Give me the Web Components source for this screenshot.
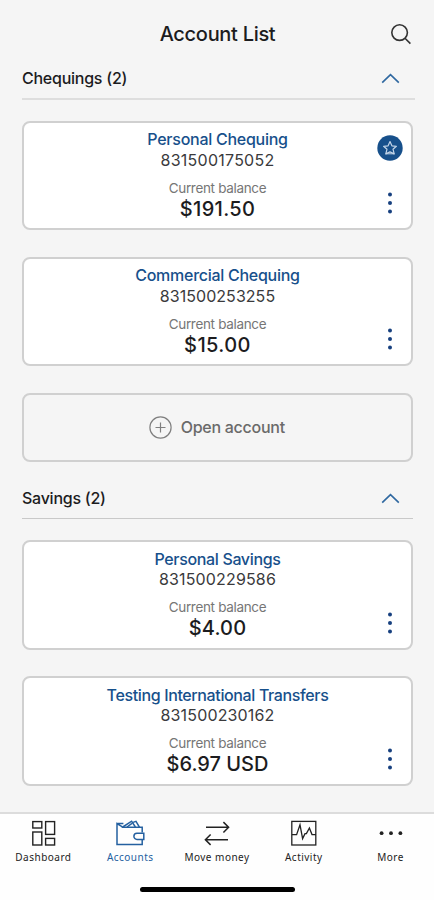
<!DOCTYPE html>
<html lang="en">
<head>
  <meta charset="UTF-8">
  <meta name="viewport" content="width=device-width, initial-scale=1.0">
  <title>Account List</title>
  <style>
    body {
      margin: 0;
      background: #f5f5f5;
      font-family: Inter, "Liberation Sans", sans-serif;
      color: #1c1c1e;
    }
  </style>
</head>
<body>
  <bank-app>
    <app-header slot="header">Account List</app-header>
    <account-section heading="Chequings (2)" class="first">
      <account-card name="Personal Chequing" number="831500175052" balance="$191.50" favourite
        style="--number-spacing: 0.25px; --balance-spacing: 0.3px"></account-card>
      <account-card name="Commercial Chequing" number="831500253255" balance="$15.00"
        style="--balance-spacing: 0.4px"></account-card>
      <open-account>Open account</open-account>
    </account-section>
    <account-section heading="Savings (2)">
      <account-card name="Personal Savings" number="831500229586" balance="$4.00"
        style="--name-spacing: -0.35px; --number-spacing: 0.15px; --balance-spacing: 0.15px"></account-card>
      <account-card name="Testing International Transfers" number="831500230162" balance="$6.97 USD"
        style="--name-spacing: -0.37px; --number-spacing: 0.15px; --balance-spacing: 0"></account-card>
    </account-section>
    <tab-bar slot="footer">
      <tab-item icon="dashboard">Dashboard</tab-item>
      <tab-item icon="accounts" active>Accounts</tab-item>
      <tab-item icon="move">Move money</tab-item>
      <tab-item icon="activity">Activity</tab-item>
      <tab-item icon="more">More</tab-item>
    </tab-bar>
  </bank-app>

  <script>
    class BankApp extends HTMLElement {
      constructor() {
        super();
        this.shadowDOM = this.attachShadow({ mode: 'open' });
      }

      connectedCallback() {
        this.shadowDOM.innerHTML = `
          <style>
            :host {
              display: flex;
              flex-direction: column;
              height: 900px;
              overflow: hidden;
            }
            main {
              flex: 1;
              min-height: 0;
              overflow: hidden;
            }
          </style>
          <slot name="header"></slot>
          <main><slot></slot></main>
          <slot name="footer"></slot>
        `;
      }
    }

    class AppHeader extends HTMLElement {
      constructor() {
        super();
        this.shadowDOM = this.attachShadow({ mode: 'open' });
      }

      connectedCallback() {
        this.shadowDOM.innerHTML = `
          <style>
            :host {
              display: grid;
              grid-template-columns: 45px 1fr 44px;
              align-items: center;
              height: 68px;
              box-sizing: border-box;
              flex: none;
            }
            h1 {
              margin: 0;
              font-size: 20px;
              font-weight: 500;
              line-height: 24px;
              letter-spacing: -0.3px;
              text-align: center;
            }
            svg {
              display: block;
            }
          </style>
          <span></span>
          <h1><slot></slot></h1>
          <svg width="22" height="22" viewBox="0 0 22 22" fill="none" stroke="#333" stroke-width="1.6">
            <circle cx="9.6" cy="9.6" r="7.8"/>
            <path d="M15 15.2L20.4 20.6"/>
          </svg>
        `;
      }
    }

    class AccountSection extends HTMLElement {
      constructor() {
        super();
        this.shadowDOM = this.attachShadow({ mode: 'open' });
      }

      connectedCallback() {
        this.shadowDOM.innerHTML = `
          <style>
            :host {
              display: block;
              padding: 0 21px 0 22px;
              margin-bottom: 26px;
            }
            header {
              display: flex;
              justify-content: space-between;
              align-items: center;
              height: 31px;
              padding: 0 13px 9px 0;
              box-sizing: border-box;
              border-bottom: 1px solid #c9c9c9;
            }
            :host(.first) header {
              height: 32px;
              margin-right: -2px;
              padding: 0 15px 10px 0;
              border-bottom: 2px solid #dedede;
            }
            h2 {
              margin: 0;
              font-size: 16px;
              font-weight: 500;
              line-height: 20px;
              letter-spacing: -0.25px;
            }
            .list {
              display: flex;
              flex-direction: column;
              gap: 26.6px;
              padding-top: 21.5px;
            }
            :host(.first) .list {
              padding-top: 20.5px;
            }
          </style>
          <header>
            <h2>${this.getAttribute('heading')}</h2>
            <svg width="19" height="11" viewBox="0 0 19 11" fill="none" stroke="#2f68a0" stroke-width="1.6">
              <path d="M1.2 9.7L9.5 1.7L17.8 9.7"/>
            </svg>
          </header>
          <div class="list"><slot></slot></div>
        `;
      }
    }

    class AccountCard extends HTMLElement {
      constructor() {
        super();
        this.shadowDOM = this.attachShadow({ mode: 'open' });
      }

      connectedCallback() {
        const star = this.hasAttribute('favourite') ? `
          <svg width="26" height="26" viewBox="0 0 26 26">
            <circle cx="13" cy="13" r="12.7" fill="#17508b"/>
            <path d="M13 6.6L14.9 10.8L19.4 11.3L16 14.2L17.2 18.9L13 16.9L8.8 18.9L10 14.2L6.6 11.3L11.1 10.8Z"
              fill="none" stroke="#c3d5e8" stroke-width="1.2" stroke-linejoin="round"/>
            <path d="M8.6 18.8H17.4" stroke="#c3d5e8" stroke-width="1"/>
          </svg>` : '<span></span>';

        this.shadowDOM.innerHTML = `
          <style>
            :host {
              display: grid;
              grid-template-columns: 41px 1fr 41px;
              height: 109.7px;
              box-sizing: border-box;
              border: 2px solid #d0d0d0;
              border-radius: 8px;
              background: #fff;
            }
            .info {
              display: flex;
              flex-direction: column;
              align-items: center;
              padding-top: 6.5px;
              white-space: nowrap;
            }
            .name {
              font-size: 16px;
              font-weight: 500;
              line-height: 20px;
              letter-spacing: var(--name-spacing, -0.27px);
              color: #17508b;
            }
            .number {
              margin-top: 0.5px;
              font-size: 16px;
              line-height: 20px;
              letter-spacing: var(--number-spacing, 0.05px);
              color: #3a3a3c;
            }
            .label {
              margin-top: 9px;
              font-size: 13.5px;
              line-height: 18px;
              letter-spacing: -0.32px;
              color: #767676;
            }
            .balance {
              font-size: 20px;
              font-weight: 500;
              line-height: 25px;
              letter-spacing: var(--balance-spacing, -0.1px);
            }
            .side {
              display: flex;
              flex-direction: column;
              justify-content: space-between;
              align-items: center;
              padding: 12px 1px 14px 0;
            }
            svg {
              display: block;
            }
          </style>
          <span></span>
          <div class="info">
            <span class="name">${this.getAttribute('name')}</span>
            <span class="number">${this.getAttribute('number')}</span>
            <span class="label">Current balance</span>
            <span class="balance">${this.getAttribute('balance')}</span>
          </div>
          <div class="side">
            ${star}
            <svg width="6" height="22" viewBox="0 0 6 22" fill="#17407f">
              <circle cx="3" cy="2.5" r="2"/>
              <circle cx="3" cy="11" r="2"/>
              <circle cx="3" cy="19.5" r="2"/>
            </svg>
          </div>
        `;
      }
    }

    class OpenAccount extends HTMLElement {
      constructor() {
        super();
        this.shadowDOM = this.attachShadow({ mode: 'open' });
      }

      connectedCallback() {
        this.shadowDOM.innerHTML = `
          <style>
            :host {
              display: flex;
              justify-content: center;
              align-items: center;
              gap: 8.5px;
              height: 68.5px;
              box-sizing: border-box;
              padding-right: 1px;
              border: 2px solid #d0d0d0;
              border-radius: 8px;
              font-size: 16px;
              font-weight: 500;
              letter-spacing: -0.27px;
              color: #6a6a6a;
            }
          </style>
          <svg width="23" height="23" viewBox="0 0 23 23" fill="none" stroke="#808080" stroke-width="1.2">
            <circle cx="11.5" cy="11.5" r="10.6"/>
            <path d="M11.5 6.5V16.5M6.5 11.5H16.5"/>
          </svg>
          <span><slot></slot></span>
        `;
      }
    }

    class TabBar extends HTMLElement {
      constructor() {
        super();
        this.shadowDOM = this.attachShadow({ mode: 'open' });
      }

      connectedCallback() {
        this.shadowDOM.innerHTML = `
          <style>
            :host {
              display: flex;
              flex-direction: column;
              justify-content: space-between;
              align-items: center;
              flex: none;
              height: 88px;
              box-sizing: border-box;
              padding-bottom: 8px;
              border-top: 2px solid #dcdcdc;
              background: #fefefe;
            }
            nav {
              display: grid;
              grid-template-columns: repeat(5, 1fr);
              width: 100%;
            }
            .home {
              width: 155px;
              height: 5px;
              border-radius: 3px;
              background: #000;
            }
          </style>
          <nav><slot></slot></nav>
          <div class="home"></div>
        `;
      }
    }

    const icons = {
      dashboard: `
        <g stroke-width="1.4">
          <rect x="4.8" y="2.6" width="9" height="6.4"/>
          <rect x="17.6" y="2.6" width="9" height="12.8"/>
          <rect x="4.8" y="13" width="9" height="13"/>
          <rect x="17.6" y="19.4" width="9" height="6.6"/>
        </g>`,
      accounts: `
        <g stroke-width="1.5">
          <path d="M7.4 7.8L2 4.6V25.6H27.2V20.8M27.2 13.6V8.2H6.6M2 4.6H8.4"/>
          <path d="M7.8 8L16.6 2.2L20.4 8M12 8L17 4.4"/>
          <path d="M18 3.4L21 2.4L24.4 8.2"/>
          <path d="M28.8 14.2H22A3.1 3.1 0 0 0 22 20.4H28.8Z"/>
        </g>`,
      move: `
        <g stroke-width="1.5">
          <path d="M4 8.3H26.4M21.4 3.1L26.6 8.3L21.4 13.5"/>
          <path d="M26 20.7H3.6M8.6 15.5L3.4 20.7L8.6 25.9"/>
        </g>`,
      activity: `
        <g stroke-width="1.3">
          <rect x="2.8" y="2.4" width="24" height="23.6"/>
          <path d="M3 15.6H7.6L11 5.8L13.6 19.6L16 14.6H17.4L20.4 9L23 15.6H27"/>
        </g>`,
      more: `
        <g fill="currentColor" stroke="none">
          <circle cx="5.6" cy="14.2" r="1.9"/>
          <circle cx="15" cy="14.2" r="1.9"/>
          <circle cx="24.4" cy="14.2" r="1.9"/>
        </g>`
    };

    class TabItem extends HTMLElement {
      constructor() {
        super();
        this.shadowDOM = this.attachShadow({ mode: 'open' });
      }

      connectedCallback() {
        this.shadowDOM.innerHTML = `
          <style>
            :host {
              display: flex;
              flex-direction: column;
              align-items: center;
              padding-top: 5px;
              color: #222;
              font-family: "Noto Sans", "Open Sans", sans-serif;
              font-size: 10px;
              line-height: 14px;
              letter-spacing: 0.48px;
              white-space: nowrap;
            }
            :host([active]) {
              color: #2460a0;
            }
            svg {
              display: block;
              margin-bottom: 1px;
            }
          </style>
          <svg width="30" height="30" viewBox="0 0 30 30" fill="none" stroke="currentColor">
            ${icons[this.getAttribute('icon')]}
          </svg>
          <span><slot></slot></span>
        `;
      }
    }

    customElements.define('bank-app', BankApp);
    customElements.define('app-header', AppHeader);
    customElements.define('account-section', AccountSection);
    customElements.define('account-card', AccountCard);
    customElements.define('open-account', OpenAccount);
    customElements.define('tab-bar', TabBar);
    customElements.define('tab-item', TabItem);
  </script>
</body>
</html>
